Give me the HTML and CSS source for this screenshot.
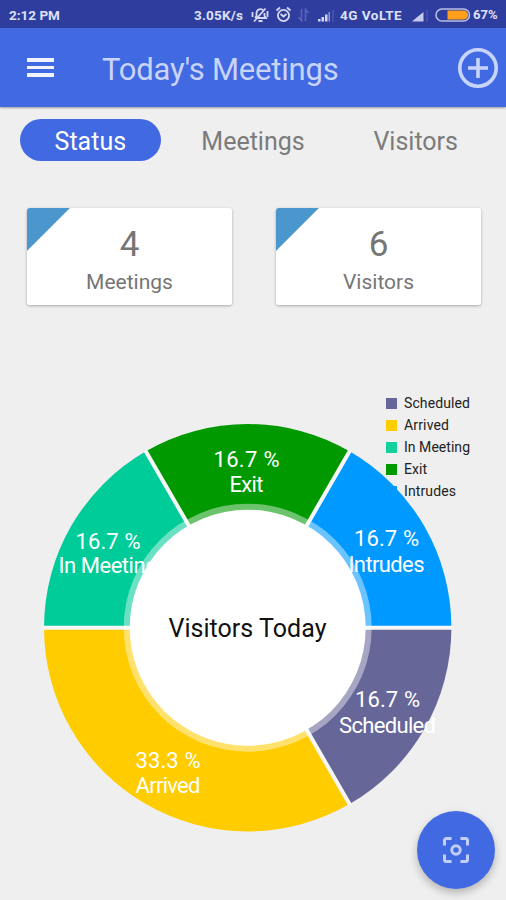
FILE: index.html
```html
<!DOCTYPE html>
<html lang="en">
<head>
    <meta charset="UTF-8">
    <meta name="viewport" content="width=device-width, initial-scale=1.0">
    <title>Today's Meetings</title>
    <link rel="stylesheet" href="styles.css">
</head>
<body>

    <div class="status-bar">
        <span class="clock">2:12 PM</span>
        <span class="speed">3.05K/s</span>
        <svg class="status-icons" width="88" height="20" viewBox="0 0 88 20" fill="none">
            <!-- muted bell -->
            <g stroke="#d5d9f3" stroke-width="1.8">
                <path d="M7 13l1.500-2V8a4 4 0 0 1 7-2.500M16.500 8v3l1.500 2H9.500M10.500 16h4M6 16.500L17.500 3.500M4.500 7v5M19.500 6v6"/>
            </g>
            <!-- alarm -->
            <g stroke="#d5d9f3" stroke-width="1.8">
                <circle cx="35.500" cy="10.500" r="5.600"/>
                <path d="M32.500 9l3 2.500L38.500 9M28.500 5.500l3.500-3M39 2.500l3.500 3"/>
            </g>
            <!-- data arrows -->
            <path d="M53.500 4v11.500l-3-3.500M57.500 16V4.500l3 3.500" stroke="#5965b8" stroke-width="1.600"/>
            <!-- signal -->
            <path d="M70 14h2.500v2.500H70zM73.500 12H76v4.500h-2.500zM77 9.500h2.500v7H77z" fill="#d5d9f3"/>
            <path d="M80.500 7H82v9.500h-1.500z" fill="#8f98d4"/>
            <path d="M84 5h2v11.500h-2z" fill="#4350aa"/>
        </svg>
        <span class="network">4G VoLTE</span>
        <svg class="signal" width="18" height="20" viewBox="0 0 18 20">
            <path d="M0 16.500L4 13l7.500-6v9.500z" fill="#c5caeb"/>
            <path d="M14 5h2v11.500h-2z" fill="#4350aa"/>
        </svg>
        <svg class="battery" width="36" height="14" viewBox="0 0 36 14">
            <rect x="1" y="1" width="33.500" height="12" rx="6" fill="none" stroke="#b9bfe2" stroke-width="1.600"/>
            <path d="M12.500 2.500h16a4.500 4.500 0 0 1 0 9h-16z" fill="#ff9f1c"/>
        </svg>
        <span class="percent">67%</span>
    </div>

    <header class="app-bar">
        <div class="menu-button">
            <span></span>
            <span></span>
            <span></span>
        </div>
        <h1>Today's Meetings</h1>
        <svg class="add-button" width="42" height="42" viewBox="0 0 42 42" fill="none" stroke="#c9d4fb">
            <circle cx="21" cy="21" r="18.200" stroke-width="3.600"/>
            <path d="M21 11v20M11 21h20" stroke-width="3.600"/>
        </svg>
    </header>

    <nav class="tabs">
        <a class="tab active">Status</a>
        <a class="tab">Meetings</a>
        <a class="tab">Visitors</a>
    </nav>

    <div class="cards">
        <div class="card">
            <div class="count">4</div>
            <div class="label">Meetings</div>
        </div>
        <div class="card">
            <div class="count">6</div>
            <div class="label">Visitors</div>
        </div>
    </div>

    <svg class="chart" width="506" height="460" viewBox="0 380 506 460">
        <g class="legend">
            <rect x="386" y="398" width="11" height="11" fill="#666699"/>
            <text x="404" y="408" textLength="66">Scheduled</text>
            <rect x="386" y="420" width="11" height="11" fill="#ffcc00"/>
            <text x="404" y="430" textLength="45">Arrived</text>
            <rect x="386" y="442" width="11" height="11" fill="#14d19b"/>
            <text x="404" y="452" textLength="66">In Meeting</text>
            <rect x="386" y="464" width="11" height="11" fill="#009900"/>
            <text x="404" y="474" textLength="23">Exit</text>
            <rect x="386" y="486" width="11" height="11" fill="#0099ff"/>
            <text x="404" y="496" textLength="52">Intrudes</text>
        </g>

        <!-- slices, centre 247.7,627.7 radius 203.7 -->
        <path d="M247.700 627.700H451.400A203.700 203.700 0 0 1 349.550 804.110Z" fill="#666699"/>
        <path d="M247.700 627.700L349.550 804.110A203.700 203.700 0 0 1 44 627.700Z" fill="#ffcc00"/>
        <path d="M247.700 627.700H44A203.700 203.700 0 0 1 145.850 451.290Z" fill="#00cc99"/>
        <path d="M247.700 627.700L145.850 451.290A203.700 203.700 0 0 1 349.550 451.290Z" fill="#009900"/>
        <path d="M247.700 627.700L349.550 451.290A203.700 203.700 0 0 1 451.400 627.700Z" fill="#0099ff"/>
        <path d="M43 627.700H452.400M145.350 450.420L247.700 627.700L350.050 450.420M247.700 627.700L350.050 804.980" fill="none" stroke="#f6f6f6" stroke-width="4"/>

        <circle cx="247.700" cy="627.700" r="124" fill="#fff" fill-opacity="0.420"/>
        <circle class="hole" cx="247.700" cy="627.700" r="118"/>

        <g class="slice-text">
            <text x="387.500" y="707" textLength="65">16.7 %</text>
            <text x="387.500" y="732.500" textLength="97">Scheduled</text>
            <text x="168" y="768" textLength="65">33.3 %</text>
            <text x="168" y="793" textLength="65">Arrived</text>
            <text x="108" y="548.500" textLength="65">16.7 %</text>
            <text x="108" y="573" textLength="99">In Meeting</text>
            <text x="246.500" y="467" textLength="66">16.7 %</text>
            <text x="246.500" y="492" textLength="34">Exit</text>
            <text x="386.500" y="546" textLength="65">16.7 %</text>
            <text x="386.500" y="571.500" textLength="76">Intrudes</text>
        </g>

        <text class="center-text" x="247.500" y="636.500" textLength="158">Visitors Today</text>
    </svg>

    <div class="scan-button">
        <svg width="28" height="28" viewBox="0 0 28 28" fill="none" stroke="#c3cffb" stroke-width="3">
            <path d="M2.500 9.500v-5a2 2 0 0 1 2-2h5M18.500 2.500h5a2 2 0 0 1 2 2v5M25.500 18.500v5a2 2 0 0 1-2 2h-5M9.500 25.500h-5a2 2 0 0 1-2-2v-5"/>
            <circle cx="14" cy="14" r="4.200"/>
        </svg>
    </div>

</body>
</html>
```
FILE: styles.css
```css
body {
    margin: 0;
    padding: 0;
    height: 900px;
    overflow: hidden;
    background-color: #efefef;
    font-family: Roboto, "Liberation Sans", sans-serif;
}

.status-bar {
    height: 28px;
    box-sizing: border-box;
    padding: 1px 8px 0 9px;
    display: flex;
    align-items: center;
    background-color: #2f3d9e;
    color: #dde1f8;
    font-size: 13.5px;
    font-weight: 700;
    white-space: nowrap;
}

.clock {
    width: 185px;
}

.speed {
    width: 54px;
    letter-spacing: 0.2px;
}

.status-icons {
    width: 88px;
    flex-shrink: 0;
}

.network {
    width: 72px;
    margin-left: 4px;
    letter-spacing: 0.5px;
}

.battery {
    margin-left: 5px;
}

.percent {
    margin-left: 2px;
    font-size: 13px;
}

.app-bar {
    height: 79px;
    box-sizing: border-box;
    padding: 0 7px 0 27px;
    display: flex;
    align-items: center;
    background-color: #4169e1;
    box-shadow: 0 1px 2px rgba(0, 0, 0, 0.35);
}

.menu-button {
    width: 27px;
    display: flex;
    flex-direction: column;
    gap: 4px;
}

.menu-button span {
    height: 3.5px;
    background-color: #f1f4ff;
}

.app-bar h1 {
    flex-grow: 1;
    margin: 4px 0 0 48px;
    color: #c9d4fb;
    font-size: 31px;
    font-weight: 400;
    letter-spacing: -0.2px;
}

.tabs {
    display: flex;
    padding: 12px 20px 0;
    gap: 22px;
}

.tab {
    width: 141px;
    height: 42px;
    border-radius: 21px;
    line-height: 46px;
    text-align: center;
    color: #7b7b7b;
    font-size: 25px;
}

.tab.active {
    background-color: #4169e1;
    color: #fff;
}

.cards {
    display: flex;
    gap: 44px;
    padding: 47px 25px 0 27px;
}

.card {
    flex: 1;
    height: 97px;
    box-sizing: border-box;
    padding-top: 16px;
    border-radius: 3px;
    background: linear-gradient(135deg, #4b97cd 30px, #fff 30.7px);
    box-shadow: 0 1px 3px rgba(0, 0, 0, 0.3);
    color: #757575;
    text-align: center;
}

.count {
    font-size: 35px;
    line-height: 42px;
}

.label {
    font-size: 21px;
    line-height: 32px;
}

.chart {
    display: block;
    margin-top: 75px;
}

.legend text {
    font-size: 14px;
    fill: #222;
}

.slice-text text {
    font-size: 22px;
    fill: #fff;
    text-anchor: middle;
}

.hole {
    fill: #fff;
}

.center-text {
    font-size: 25px;
    fill: #111;
    text-anchor: middle;
}

.scan-button {
    position: fixed;
    left: 417px;
    top: 811px;
    width: 78px;
    height: 78px;
    border-radius: 50%;
    display: flex;
    align-items: center;
    justify-content: center;
    background-color: #4169e1;
    box-shadow: 0 4px 8px rgba(0, 0, 0, 0.25);
}
```
